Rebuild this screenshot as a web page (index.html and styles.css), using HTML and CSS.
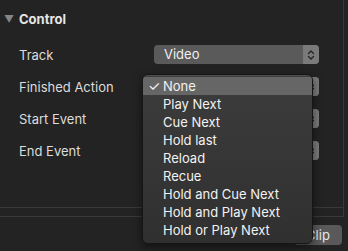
FILE: index.html
```html
<!DOCTYPE html>
<html lang="en">
<head>
    <meta charset="UTF-8">
    <title>Control</title>
    <link rel="stylesheet" href="styles.css">
</head>
<body>
    <div class="frame">
        <div class="panel">
            <div class="section-head">
                <span class="disclosure">&#9660;</span>
                <span class="section-title">Control</span>
            </div>

            <div class="rows">
                <div class="row">
                    <span class="label">Track</span>
                    <div class="select"><span class="value">Video</span><span class="stepper"><svg width="8" height="12" viewBox="0 0 8 12"><path d="M1.5 4.5 4 2l2.5 2.5M1.5 7.5 4 10l2.5-2.5" fill="none" stroke="#222" stroke-width="1.3" stroke-linecap="round" stroke-linejoin="round"/></svg></span></div>
                </div>
                <!-- values of these three are under the open menu -->
                <div class="row">
                    <span class="label">Finished Action</span>
                    <div class="select"><span class="value"></span><span class="stepper"><svg width="8" height="12" viewBox="0 0 8 12"><path d="M1.5 4.5 4 2l2.5 2.5M1.5 7.5 4 10l2.5-2.5" fill="none" stroke="#222" stroke-width="1.3" stroke-linecap="round" stroke-linejoin="round"/></svg></span></div>
                </div>
                <div class="row">
                    <span class="label">Start Event</span>
                    <div class="select"><span class="value"></span><span class="stepper"><svg width="8" height="12" viewBox="0 0 8 12"><path d="M1.5 4.5 4 2l2.5 2.5M1.5 7.5 4 10l2.5-2.5" fill="none" stroke="#222" stroke-width="1.3" stroke-linecap="round" stroke-linejoin="round"/></svg></span></div>
                </div>
                <div class="row">
                    <span class="label">End Event</span>
                    <div class="select"><span class="value"></span><span class="stepper"><svg width="8" height="12" viewBox="0 0 8 12"><path d="M1.5 4.5 4 2l2.5 2.5M1.5 7.5 4 10l2.5-2.5" fill="none" stroke="#222" stroke-width="1.3" stroke-linecap="round" stroke-linejoin="round"/></svg></span></div>
                </div>
            </div>
        </div>
        <div class="strip"></div>
    </div>

    <div class="footer">
        <button class="btn">Clip</button>
    </div>

    <!-- open popup of "Finished Action" -->
    <ul class="menu">
        <li class="item selected"><span class="check">&#10003;</span>None</li>
        <li class="item">Play Next</li>
        <li class="item">Cue Next</li>
        <li class="item">Hold last</li>
        <li class="item">Reload</li>
        <li class="item">Recue</li>
        <li class="item">Hold and Cue Next</li>
        <li class="item">Hold and Play Next</li>
        <li class="item">Hold or Play Next</li>
    </ul>
</body>
</html>
```

FILE: styles.css
```css
body {
    margin: 0;
    width: 348px;
    height: 251px;
    overflow: hidden;
    position: relative;
    background: #232323;
    font-family: Inter, "Noto Sans", sans-serif;
    font-size: 13px;
    color: #dcdcdc;
}

.frame {
    width: 343px;
    border-right: 1px solid #393939;
}

.panel {
    height: 207px;
    border-bottom: 1px solid #393939;
}

.strip {
    height: 8px;
    border-bottom: 1px solid #393939;
}

.section-head {
    display: flex;
    align-items: center;
    height: 18px;
    padding: 10px 0 0 4px;
}

.disclosure {
    font-size: 10px;
    color: #858585;
    width: 15px;
}

.section-title {
    font-weight: bold;
    color: #e6e6e6;
}

.rows {
    padding-top: 17px;
}

.row {
    display: flex;
    align-items: center;
    height: 19px;
    margin-bottom: 13px;
}

.label {
    width: 135px;
    padding-left: 19px;
}

.select {
    display: flex;
    width: 165px;
    height: 19px;
    border-radius: 4px;
    background: #5a5a5a;
    overflow: hidden;
}

.value {
    flex: 1;
    padding-left: 10px;
    line-height: 19px;
    color: #f0f0f0;
}

.stepper {
    width: 16px;
    display: flex;
    align-items: center;
    justify-content: center;
    background: #7a7a7a;
}

.footer {
    display: flex;
    justify-content: flex-end;
    padding: 8px 6px 0 0;
}

.btn {
    width: 48px;
    height: 20px;
    border: none;
    border-radius: 4px;
    background: #595959;
    color: #e8e8e8;
    font-family: inherit;
    font-size: 13px;
    padding: 0;
}

.menu {
    position: absolute;
    left: 142px;
    top: 74px;
    width: 169px;
    height: 166px;
    margin: 0;
    padding: 2px 0 0;
    list-style: none;
    border: 1px solid #161616;
    border-radius: 6px;
    background: linear-gradient(#3c3c3c, #303030);
    box-shadow: inset 0 1px 0 #4e4e4e, 0 3px 10px rgba(0, 0, 0, 0.5);
    overflow: hidden;
}

.item {
    position: relative;
    height: 18px;
    line-height: 18px;
    padding-left: 20px;
    color: #f2f2f2;
}

.item.selected {
    background: #666666;
}

.check {
    position: absolute;
    left: 5px;
    font-size: 14px;
}
```
